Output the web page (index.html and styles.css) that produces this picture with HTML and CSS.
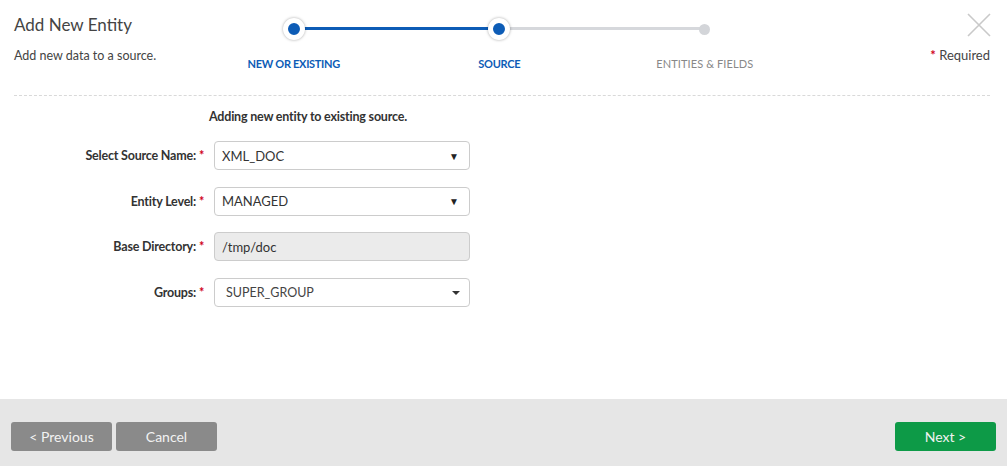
FILE: index.html
```html
<!DOCTYPE html>
<html lang="en">
<head>
    <meta charset="UTF-8">
    <title>Add New Entity</title>
    <link rel="stylesheet" href="styles.css">
</head>
<body>
    <div class="modal">
        <div class="modal-main">
            <!-- Header -->
            <div class="modal-header">
                <div class="header-text">
                    <h1>Add New Entity</h1>
                    <p class="subtitle">Add new data to a source.</p>
                </div>

                <div class="stepper">
                    <div class="step done first">
                        <div class="step-track"><span class="dot"></span></div>
                        <div class="step-label">NEW OR EXISTING</div>
                    </div>
                    <div class="step current">
                        <div class="step-track"><span class="dot"></span></div>
                        <div class="step-label">SOURCE</div>
                    </div>
                    <div class="step todo last">
                        <div class="step-track"><span class="dot"></span></div>
                        <div class="step-label">ENTITIES &amp; FIELDS</div>
                    </div>
                </div>

                <div class="header-right">
                    <svg class="close-icon" width="24" height="24" viewBox="0 0 24 24">
                        <path d="M1 1 L23 23 M23 1 L1 23" stroke="#c9c9c9" stroke-width="1.6" fill="none"/>
                    </svg>
                    <div class="required-note"><span class="req">*</span> Required</div>
                </div>
            </div>

            <div class="divider"></div>

            <!-- Form -->
            <p class="form-intro">Adding new entity to existing source.</p>
            <div class="form-grid">
                <label>Select Source Name: <span class="req">*</span></label>
                <div class="field select-field">XML_DOC<span class="caret">&#9660;</span></div>

                <label>Entity Level: <span class="req">*</span></label>
                <div class="field select-field">MANAGED<span class="caret">&#9660;</span></div>

                <label>Base Directory: <span class="req">*</span></label>
                <div class="field readonly">/tmp/doc</div>

                <label>Groups: <span class="req">*</span></label>
                <div class="field multi-field">SUPER_GROUP<span class="small-caret"></span></div>
            </div>
        </div>

        <!-- Footer -->
        <div class="modal-footer">
            <div class="footer-left">
                <button class="btn btn-grey">&lt; Previous</button>
                <button class="btn btn-grey">Cancel</button>
            </div>
            <button class="btn btn-green">Next &gt;</button>
        </div>
    </div>
</body>
</html>
```

FILE: styles.css
```css
body {
    margin: 0;
    font-family: Lato, "Open Sans", sans-serif;
    color: #333;
    background-color: #fff;
}
.modal {
    display: flex;
    flex-direction: column;
    height: 466px;
}
.modal-main {
    flex: 1;
}
.modal-header {
    display: flex;
    padding: 13px 17px 0 14px;
    height: 71px;
}
.header-text {
    width: 177px;
}
h1 {
    margin: 0;
    font-size: 17px;
    font-weight: normal;
    color: #444;
    line-height: 24px;
}
.subtitle {
    margin: 10px 0 0;
    font-size: 12.5px;
    color: #444;
    line-height: 18px;
}
.stepper {
    display: grid;
    grid-template-columns: repeat(3, 205.5px);
    width: 616.5px;
}
.step {
    display: flex;
    flex-direction: column;
    align-items: center;
}
.step-track {
    position: relative;
    width: 100%;
    height: 24px;
    margin-top: 4px;
    display: flex;
    justify-content: center;
    align-items: center;
}
.step-track::before,
.step-track::after {
    content: "";
    position: absolute;
    top: 10px;
    height: 3px;
    width: 50%;
    background-color: #d6d8dc;
}
.step-track::before {
    left: 0;
}
.step-track::after {
    right: 0;
}
.step.done .step-track::after,
.step.current .step-track::before {
    background-color: #0d5cb6;
}
.step.first .step-track::before,
.step.last .step-track::after {
    display: none;
}
.dot {
    position: relative;
    z-index: 1;
    width: 12px;
    height: 12px;
    border-radius: 50%;
    background-color: #0d5cb6;
    border: 5px solid #fff;
    box-shadow: 0 0 3px rgba(0, 0, 0, 0.35);
}
.step.todo .dot {
    width: 11px;
    height: 11px;
    border: none;
    box-shadow: none;
    background-color: #d3d5d9;
}
.step-label {
    margin-top: 16px;
    font-size: 11px;
    font-weight: bold;
    color: #0d5cb6;
    letter-spacing: -0.3px;
}
.step.todo .step-label {
    font-weight: normal;
    color: #888;
    letter-spacing: 0.1px;
}
.header-right {
    flex: 1;
    display: flex;
    flex-direction: column;
    align-items: flex-end;
}
.close-icon {
    margin-right: -1px;
}
.required-note {
    margin-top: 10px;
    font-size: 13px;
    color: #444;
}
.req {
    color: #d0021b;
    font-weight: bold;
}
.divider {
    margin: 11px 17px 0 14px;
    border-top: 1px dashed #d9d9d9;
}
.form-intro {
    margin: 13px 0 0 209px;
    font-size: 12.5px;
    font-weight: bold;
    color: #333;
    letter-spacing: -0.2px;
}
.form-grid {
    display: grid;
    grid-template-columns: 190px 256px;
    column-gap: 10px;
    row-gap: 16.7px;
    margin: 17px 0 0 14px;
    align-items: center;
}
.form-grid label {
    text-align: right;
    font-size: 12.5px;
    font-weight: bold;
    color: #333;
    letter-spacing: -0.2px;
}
.field {
    height: 29px;
    box-sizing: border-box;
    border: 1px solid #ccc;
    border-radius: 4px;
    padding: 0 10px 0 7px;
    display: flex;
    align-items: center;
    justify-content: space-between;
    font-size: 13px;
    color: #333;
    background-color: #fff;
}
.caret {
    font-size: 10px;
    color: #222;
}
.readonly {
    background-color: #ebebeb;
}
.multi-field {
    padding-left: 11px;
    padding-right: 9px;
    font-size: 12.5px;
    color: #444;
}
.small-caret {
    width: 0;
    height: 0;
    border-left: 4px solid transparent;
    border-right: 4px solid transparent;
    border-top: 4px solid #333;
}
.modal-footer {
    height: 67px;
    box-sizing: border-box;
    padding: 23px 11px 0 11px;
    background-color: #e6e6e6;
    display: flex;
    justify-content: space-between;
    align-items: flex-start;
}
.footer-left {
    display: flex;
    gap: 4px;
}
.btn {
    width: 101px;
    height: 29px;
    border: none;
    border-radius: 3px;
    font-family: Lato, "Open Sans", sans-serif;
    font-size: 14px;
    color: #f2f2f2;
    cursor: pointer;
}
.btn-grey {
    background-color: #8a8a8a;
}
.btn-green {
    background-color: #0d9a47;
}
```
